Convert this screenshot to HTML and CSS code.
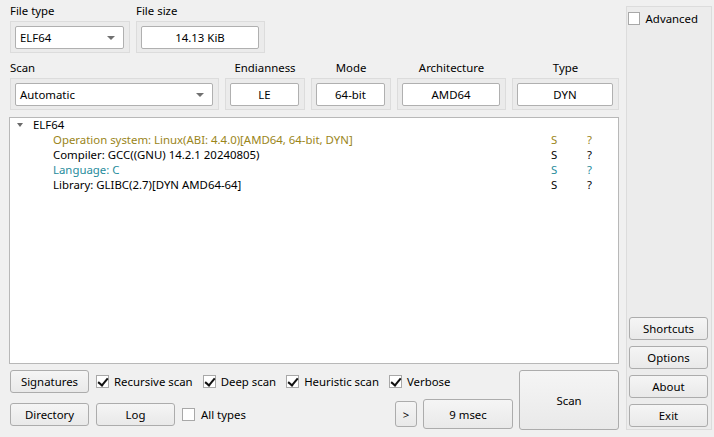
FILE: index.html
```html
<!DOCTYPE html>
<html>
<head>
<meta charset="utf-8">
<link rel="stylesheet" href="styles.css">
</head>
<body>
<div class="app">
  <div class="main">
    <div class="row row1">
      <div class="field">
        <div class="label">File type</div>
        <div class="frame w-ft"><div class="combo"><span>ELF64</span><i class="arrow"></i></div></div>
      </div>
      <div class="field">
        <div class="label">File size</div>
        <div class="frame w-fs"><div class="input">14.13 KiB</div></div>
      </div>
    </div>
    <div class="row row2">
      <div class="field">
        <div class="label">Scan</div>
        <div class="frame w-scan"><div class="combo"><span>Automatic</span><i class="arrow"></i></div></div>
      </div>
      <div class="field center">
        <div class="label">Endianness</div>
        <div class="frame w-end"><div class="input">LE</div></div>
      </div>
      <div class="field center">
        <div class="label">Mode</div>
        <div class="frame w-mode"><div class="input">64-bit</div></div>
      </div>
      <div class="field center">
        <div class="label">Architecture</div>
        <div class="frame w-arch"><div class="input">AMD64</div></div>
      </div>
      <div class="field center">
        <div class="label">Type</div>
        <div class="frame w-type"><div class="input">DYN</div></div>
      </div>
    </div>
    <div class="tree">
      <div class="trow root"><i class="tri"></i><span class="name">ELF64</span></div>
      <div class="trow child olive"><span class="name">Operation system: Linux(ABI: 4.4.0)[AMD64, 64-bit, DYN]</span><span class="c1">S</span><span class="c2">?</span></div>
      <div class="trow child"><span class="name">Compiler: GCC((GNU) 14.2.1 20240805)</span><span class="c1">S</span><span class="c2">?</span></div>
      <div class="trow child teal"><span class="name">Language: C</span><span class="c1">S</span><span class="c2">?</span></div>
      <div class="trow child"><span class="name">Library: GLIBC(2.7)[DYN AMD64-64]</span><span class="c1">S</span><span class="c2">?</span></div>
    </div>
    <div class="bottom">
      <div class="bleft">
        <div class="brow1">
          <button class="btn b-wide">Signatures</button>
          <label class="chk"><i class="box on"></i>Recursive scan</label>
          <label class="chk"><i class="box on"></i>Deep scan</label>
          <label class="chk"><i class="box on"></i>Heuristic scan</label>
          <label class="chk"><i class="box on"></i>Verbose</label>
        </div>
        <div class="brow2">
          <button class="btn b-wide">Directory</button>
          <button class="btn b-wide">Log</button>
          <label class="chk"><i class="box"></i>All types</label>
          <span class="spacer"></span>
          <button class="btn b-more">&gt;</button>
          <button class="btn b-time">9 msec</button>
        </div>
      </div>
      <button class="btn b-scan">Scan</button>
    </div>
  </div>
  <div class="side">
    <label class="chk adv"><i class="box"></i>Advanced</label>
    <div class="sbtns">
      <button class="btn b-side">Shortcuts</button>
      <button class="btn b-side">Options</button>
      <button class="btn b-side">About</button>
      <button class="btn b-side">Exit</button>
    </div>
  </div>
</div>
</body>
</html>
```
FILE: styles.css
```css
* { box-sizing: border-box; }
html, body { margin: 0; padding: 0; }
body {
  width: 714px; height: 437px; overflow: hidden;
  background: #f0f0f0;
  font-family: "Noto Sans", "Open Sans", sans-serif;
  font-size: 11.4px; color: #000;
}
.app { display: flex; height: 437px; padding: 4px 3px 7px 9px; }
.main { width: 610px; display: flex; flex-direction: column; }
.row { display: flex; padding-left: 1px; gap: 6px; }
.row2 { margin-top: 8px; }
.field { display: flex; flex-direction: column; }
.field.center .label { text-align: center; }
.label { height: 17px; line-height: 14px; }
.frame {
  height: 32px; padding: 4px 5px 4px 4px;
  background: #ebebeb; border: 1px solid #dcdcdc;
}
.w-ft { width: 120px; }
.w-fs { width: 129px; }
.w-scan { width: 209px; }
.w-end { width: 80px; }
.w-mode { width: 80px; }
.w-arch { width: 109px; }
.w-type { width: 107px; }
.combo, .input {
  height: 23px; background: #fff; border: 1px solid #b0b0b0; border-radius: 2px;
  display: flex; align-items: center;
}
.combo { padding: 0 8px 0 4px; justify-content: space-between; }
.input { justify-content: center; }
.arrow {
  width: 0; height: 0; border-left: 4px solid transparent; border-right: 4px solid transparent;
  border-top: 4px solid #707070;
}
.tree {
  margin-top: 7px; width: 610px; height: 248px;
  background: #fff; border: 1px solid #b8b8b8; padding-top: 0;
}
.trow { height: 15px; line-height: 13px; display: flex; white-space: nowrap; }
.root { padding-left: 7px; }
.tri {
  width: 0; height: 0; margin-top: 5px; margin-right: 10px;
  border-left: 3px solid transparent; border-right: 3px solid transparent; border-top: 4px solid #6a6a6a;
}
.child { padding-left: 43px; }
.child .name { width: 498px; }
.c1 { width: 36px; }
.olive { color: #9a8519; }
.teal { color: #1f8c9c; }
.bottom { display: flex; margin-top: 6px; padding-left: 1px; }
.bleft { width: 509px; display: flex; flex-direction: column; }
.brow1 { display: flex; align-items: center; height: 23px; }
.brow2 { display: flex; align-items: center; height: 30px; margin-top: 6px; }
.btn {
  font: inherit; color: #000; height: 23px; padding: 0;
  background: linear-gradient(#f5f5f5, #e9e9e9);
  border: 1px solid #acacac; border-radius: 3px;
}
.b-wide { width: 79px; margin-right: 7px; }
.chk { display: flex; align-items: center; margin-right: 10px; white-space: nowrap; }
.box {
  width: 13px; height: 13px; background: #fff; border: 1px solid #a8a8a8; margin-right: 5px;
  position: relative; display: inline-block;
}
.box.on::after {
  content: ""; position: absolute; left: 3px; top: 0px; width: 4px; height: 8px;
  border: solid #111; border-width: 0 2px 2px 0; transform: rotate(40deg);
}
.brow2 .chk .box { margin-right: 6px; }
.spacer { flex: 1; }
.b-more { width: 22px; height: 26px; margin-right: 6px; }
.b-time { width: 90px; height: 30px; margin-right: 6px; }
.b-scan { width: 100px; height: 60px; }
.side {
  margin-left: 7px; margin-top: 2px; width: 86px;
  background: #ececec; border: 1px solid #dcdcdc;
  display: flex; flex-direction: column; justify-content: space-between;
  padding: 4px 3px 2px 1px;
}
.adv .box { margin-right: 6px; }
.sbtns { display: flex; flex-direction: column; gap: 6px; padding-left: 1px; }
.b-side { width: 79px; }
```
